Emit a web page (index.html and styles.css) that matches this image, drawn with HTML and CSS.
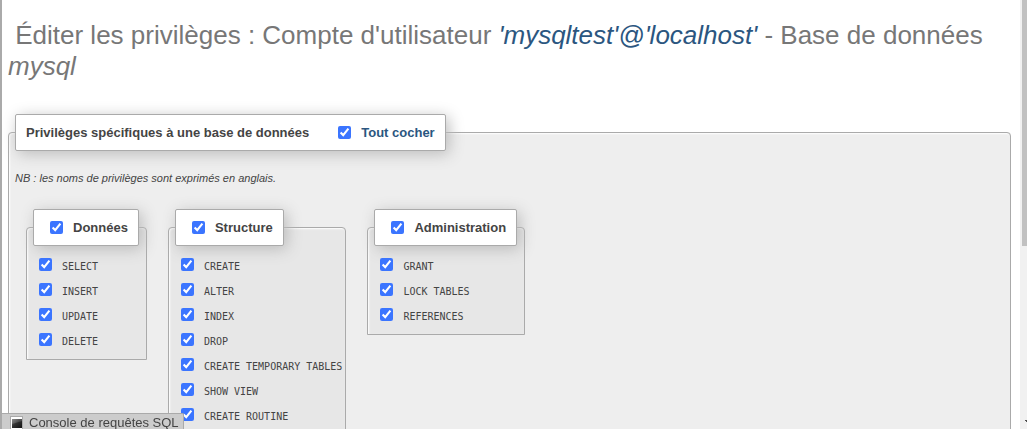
FILE: index.html
```
<!DOCTYPE html>
<html lang="fr">
<head>
<meta charset="utf-8">
<title>Éditer les privilèges</title>
<link rel="stylesheet" href="styles.css">
</head>
<body>
<main class="page">
  <h2 class="title">&nbsp;Éditer les privilèges : Compte d'utilisateur <a class="user" href="#">'mysqltest'@'localhost'</a> - Base de données <i>mysql</i></h2>
  <form>
    <fieldset class="box main-box">
      <legend class="tag"><span>Privilèges spécifiques à une base de données</span><span class="check-all"><input type="checkbox" id="all" checked><label for="all">Tout cocher</label></span></legend>
      <p class="note">NB : les noms de privilèges sont exprimés en anglais.</p>
      <div class="groups">
        <fieldset class="box group">
          <legend class="tag tag-group"><input type="checkbox" id="data" checked><label for="data">Données</label></legend>
          <div class="row"><input type="checkbox" id="p1" checked><label for="p1">SELECT</label></div>
          <div class="row"><input type="checkbox" id="p2" checked><label for="p2">INSERT</label></div>
          <div class="row"><input type="checkbox" id="p3" checked><label for="p3">UPDATE</label></div>
          <div class="row"><input type="checkbox" id="p4" checked><label for="p4">DELETE</label></div>
        </fieldset>
        <fieldset class="box group">
          <legend class="tag tag-group"><input type="checkbox" id="struct" checked><label for="struct">Structure</label></legend>
          <div class="row"><input type="checkbox" id="p5" checked><label for="p5">CREATE</label></div>
          <div class="row"><input type="checkbox" id="p6" checked><label for="p6">ALTER</label></div>
          <div class="row"><input type="checkbox" id="p7" checked><label for="p7">INDEX</label></div>
          <div class="row"><input type="checkbox" id="p8" checked><label for="p8">DROP</label></div>
          <div class="row"><input type="checkbox" id="p9" checked><label for="p9">CREATE TEMPORARY TABLES</label></div>
          <div class="row"><input type="checkbox" id="p10" checked><label for="p10">SHOW VIEW</label></div>
          <div class="row"><input type="checkbox" id="p11" checked><label for="p11">CREATE ROUTINE</label></div>
        </fieldset>
        <fieldset class="box group">
          <legend class="tag tag-group"><input type="checkbox" id="admin" checked><label for="admin">Administration</label></legend>
          <div class="row"><input type="checkbox" id="p12" checked><label for="p12">GRANT</label></div>
          <div class="row"><input type="checkbox" id="p13" checked><label for="p13">LOCK TABLES</label></div>
          <div class="row"><input type="checkbox" id="p14" checked><label for="p14">REFERENCES</label></div>
        </fieldset>
      </div>
    </fieldset>
  </form>
</main>
<div class="scrollbar" aria-hidden="true">
  <div class="thumb"></div>
  <svg class="arrow" width="7" height="4" viewBox="0 0 7 4"><path d="M0 0h7v1H6v1H5v1H4v1H3V3H2V2H1V1H0z" fill="#505050"/></svg>
</div>
<button class="console" type="button">
  <svg width="13" height="13" viewBox="0 0 13 13"><defs><linearGradient id="g" x1="0" y1="0" x2="1" y2="1"><stop offset="0" stop-color="#777"/><stop offset=".45" stop-color="#333"/><stop offset="1" stop-color="#111"/></linearGradient></defs><rect x=".5" y=".5" width="12" height="14" fill="#fff" stroke="#aaa"/><rect x="2" y="3" width="10" height="9" fill="url(#g)"/><path d="M2 3h10v2L2 8z" fill="#fff" opacity=".15"/></svg>
  <span>Console de requêtes SQL</span>
</button>
</body>
</html>
```
FILE: styles.css
```
* { box-sizing: border-box; }
body {
  margin: 0;
  height: 100vh;
  display: flex;
  overflow: hidden;
  background: #fff;
  color: #444;
  font: 13px/17px "Liberation Sans", Arial, sans-serif;
}
.page {
  flex: 1;
  min-width: 0;
  overflow: hidden;
  border-left: 2px solid #aaa;
  padding: 20px 9px 0 6px;
}
.title {
  margin: 0 0 32px;
  color: #777;
  font-size: 26px;
  font-weight: 400;
  line-height: 31px;
}
.user { color: #2b5680; font-style: italic; text-decoration: none; }
.box {
  margin: 0;
  min-width: 0;
  border: 1px solid #aaa;
  border-radius: 4px 4px 0 0;
  background: #eee;
  box-shadow: 1px 1px 2px #fff inset;
}
.main-box { padding: 0 6px 20px; }
.tag {
  display: flex;
  align-items: center;
  gap: 26px;
  padding: 9px 10px;
  border: 1px solid #aaa;
  border-radius: 2px;
  background: #fff;
  box-shadow: 3px 3px 15px #bbb;
  font-weight: 700;
}
input[type="checkbox"] {
  width: 13px;
  height: 13px;
  margin: 0;
  flex: none;
  accent-color: #3b75ff;
}
.check-all {
  display: flex;
  align-items: center;
  gap: 10px;
  margin-left: 3px;
  color: #2b5680;
}
.note {
  margin: 19px 0 22px;
  font-size: 11px;
  font-style: italic;
}
.groups {
  display: flex;
  align-items: flex-start;
  gap: 21px;
  padding-left: 11px;
}
.group { padding: 0 3px 7px 6px; background: #e7e7e7; }
.tag-group {
  gap: 10px;
  margin: 0 4px 6px 0;
  padding-left: 16px;
}
.row {
  display: flex;
  align-items: flex-start;
  gap: 10px;
  height: 25px;
  padding: 6px 0 0 6px;
  font: 10px/17px "DejaVu Sans Mono", monospace;
  white-space: nowrap;
}
.scrollbar {
  display: flex;
  flex-direction: column;
  justify-content: space-between;
  width: 7px;
  padding: 0 0 5px 2px;
  background: #f1f1f1;
  overflow: hidden;
}
.thumb { height: 58%; background: #c1c1c1; }
.arrow { display: block; flex: none; margin-left: 3px; }
.console {
  position: fixed;
  left: 2px;
  bottom: 0;
  display: flex;
  align-items: center;
  gap: 6px;
  height: 16px;
  padding: 2px 4px 0 8px;
  border: solid #aaa;
  border-width: 1px 1px 0 0;
  border-radius: 0 2px 0 0;
  background: #ccc;
  color: #444;
  font: 13px/15px "Liberation Sans", Arial, sans-serif;
}
```
